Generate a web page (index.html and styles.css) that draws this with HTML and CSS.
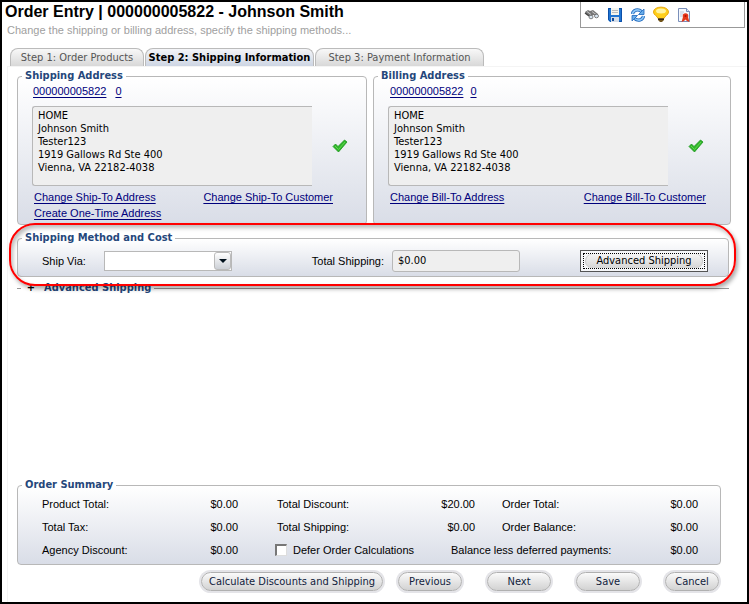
FILE: index.html
```html
<!DOCTYPE html>
<html lang="en">
<head>
<meta charset="utf-8">
<title>Order Entry</title>
<link rel="stylesheet" href="styles.css">
</head>
<body>
<div class="window">
  <header class="header">
    <div class="heading">
      <h1>Order Entry | 000000005822 - Johnson Smith</h1>
      <p>Change the shipping or billing address, specify the shipping methods...</p>
    </div>
    <div class="toolbar">
      <button type="button" aria-label="Find">
        <svg width="16" height="16" viewBox="0 0 16 16"><path d="M1 5l3-2 2 1 3-1 5 4-1 2-4-1-2 2-5-3z" fill="#777"/><path d="M3 4.500l4 3M8 4.500l4 3" stroke="#c8c8c8"/><path d="M1 6l4 3" stroke="#444" stroke-width="1.400"/><ellipse cx="7" cy="10" rx="2" ry="1.800" fill="#d8e6f2" stroke="#666" stroke-width=".8"/><ellipse cx="12.500" cy="9" rx="2" ry="1.800" fill="#d8e6f2" stroke="#666" stroke-width=".8"/></svg>
      </button>
      <button type="button" aria-label="Save order">
        <svg width="16" height="16" viewBox="0 0 16 16"><path d="M1 1h14v14H3l-2-2z" fill="#1f74d2"/><path d="M1.500 1.500h13v13H3.500l-2-2z" fill="none" stroke="#0c4fa8"/><path d="M4 1h8v7H4z" fill="#f4f4ee"/><path d="M5 3.500h6M5 5.500h6" stroke="#bbb"/><path d="M4 10h8v5H4z" fill="#d5dde8"/><path d="M5 11h2v3H5z" fill="#134a96"/></svg>
      </button>
      <button type="button" aria-label="Refresh">
        <svg width="16" height="16" viewBox="0 0 16 16"><path d="M2.500 7C3 3 8 1.500 11.500 4.500M13.500 9C13 13 8 14.500 4.500 11.500" fill="none" stroke="#1c66bd" stroke-width="3.200"/><path d="M2.500 7C3 3 8 1.500 11.500 4.500M13.500 9C13 13 8 14.500 4.500 11.500" fill="none" stroke="#8cc6f6" stroke-width="1.600"/><path d="M14 2v5.500H8.500zM2 14V8.500h5.500z" fill="#6aaeea" stroke="#1c66bd" stroke-width=".8"/></svg>
      </button>
      <button type="button" aria-label="Tips">
        <svg width="18" height="17" viewBox="0 0 18 17"><path d="M1.500 6c0-6.500 15-6.500 15 0 0 3-4 4-4.500 6.500H6C5.500 10 1.500 9 1.500 6z" fill="#ffcf1b" stroke="#e9a80c"/><ellipse cx="9" cy="5" rx="5" ry="2.500" fill="#fff3a0"/><path d="M6 12h6v2l-2 2H8l-2-2z" fill="#72551c"/><path d="M6 13.500h6" stroke="#332817"/></svg>
      </button>
      <button type="button" aria-label="Certificate">
        <svg width="16" height="16" viewBox="0 0 16 16"><path d="M2.500 1.500h8l3 3v10h-11z" fill="#f5f8fd" stroke="#7a8fba"/><path d="M10.500 1.500v3h3" fill="#dce6f5" stroke="#7a8fba"/><path d="M4 5h4M4 7h3M4 9h2" stroke="#bcc8dc"/><path d="M7 10l-1.500 5 2.500-1 1.500-1.500L11 14l2.500 1L12 10z" fill="#e33a1c"/><circle cx="9.500" cy="9" r="2.800" fill="#e8351a"/><circle cx="9.500" cy="9" r="1" fill="#a81508"/></svg>
      </button>
    </div>
  </header>

  <nav class="tabs">
    <button type="button" class="tab">Step 1: Order Products</button>
    <button type="button" class="tab tab-active">Step 2: Shipping Information</button>
    <button type="button" class="tab">Step 3: Payment Information</button>
  </nav>

  <main class="content">
    <div class="addresses">
      <fieldset class="panel">
        <legend>Shipping Address</legend>
        <div class="ids"><a href="#">000000005822</a><a href="#">0</a></div>
        <div class="address-row">
          <address>HOME<br>Johnson Smith<br>Tester123<br>1919 Gallows Rd Ste 400<br>Vienna, VA 22182-4038</address>
          <svg class="check" width="16" height="14" viewBox="0 0 16 14"><path d="M1 7.500L3.500 5 6 7.500 12.500 1 15 3 6.500 13z" fill="#2fb62a" stroke="#1b941c" stroke-width=".8"/><path d="M3 7l3.500 3.500L13 3" fill="none" stroke="#62d650"/></svg>
        </div>
        <div class="links"><a href="#">Change Ship-To Address</a><a href="#">Change Ship-To Customer</a></div>
        <div class="links"><a href="#">Create One-Time Address</a></div>
      </fieldset>
      <fieldset class="panel">
        <legend>Billing Address</legend>
        <div class="ids ids-billing"><a href="#">000000005822</a><a href="#">0</a></div>
        <div class="address-row">
          <address>HOME<br>Johnson Smith<br>Tester123<br>1919 Gallows Rd Ste 400<br>Vienna, VA 22182-4038</address>
          <svg class="check" width="16" height="14" viewBox="0 0 16 14"><path d="M1 7.500L3.500 5 6 7.500 12.500 1 15 3 6.500 13z" fill="#2fb62a" stroke="#1b941c" stroke-width=".8"/><path d="M3 7l3.500 3.500L13 3" fill="none" stroke="#62d650"/></svg>
        </div>
        <div class="links links-billing"><a href="#">Change Bill-To Address</a><a href="#">Change Bill-To Customer</a></div>
      </fieldset>
    </div>

    <div class="highlighted">
      <fieldset class="panel method">
        <legend>Shipping Method and Cost</legend>
        <div class="method-row">
          <div class="field field-via">
            <label for="via">Ship Via:</label>
            <span class="combo"><select id="via"><option></option></select><span class="arrow"></span></span>
          </div>
          <div class="field field-total">
            <label for="total">Total Shipping:</label>
            <input id="total" class="readonly" value="$0.00" readonly>
          </div>
          <button type="button" class="advanced-button"><span class="focus-ring"><span class="face">Advanced Shipping</span></span></button>
        </div>
      </fieldset>
      <fieldset class="advanced">
        <legend><button type="button" aria-label="Expand">+</button>Advanced Shipping</legend>
      </fieldset>
      <div class="callout"></div>
    </div>

    <fieldset class="panel summary">
      <legend>Order Summary</legend>
      <div class="summary-row">
        <div class="pair"><span>Product Total:</span><output>$0.00</output></div>
        <div class="pair"><span>Total Discount:</span><output>$20.00</output></div>
        <div class="pair"><span>Order Total:</span><output>$0.00</output></div>
      </div>
      <div class="summary-row">
        <div class="pair"><span>Total Tax:</span><output>$0.00</output></div>
        <div class="pair"><span>Total Shipping:</span><output>$0.00</output></div>
        <div class="pair"><span>Order Balance:</span><output>$0.00</output></div>
      </div>
      <div class="summary-row summary-last">
        <div class="pair"><span>Agency Discount:</span><output>$0.00</output></div>
        <label class="defer"><input type="checkbox">Defer Order Calculations</label>
        <div class="pair"><span>Balance less deferred payments:</span><output>$0.00</output></div>
      </div>
    </fieldset>

    <div class="actions">
      <button type="button" class="pill pill-wide">Calculate Discounts and Shipping</button>
      <button type="button" class="pill">Previous</button>
      <button type="button" class="pill">Next</button>
      <button type="button" class="pill">Save</button>
      <button type="button" class="pill pill-small">Cancel</button>
    </div>
  </main>
</div>
</body>
</html>
```
FILE: styles.css
```css
* { box-sizing: border-box; }

body {
  margin: 0;
  background: #fff;
  color: #000;
  font: 11px/16px "DejaVu Sans Condensed", "DejaVu Sans", Tahoma, sans-serif;
}

button, input, select { font: inherit; color: inherit; }
a { color: #00007c; text-underline-offset: 2px; text-decoration-skip-ink: none; }

.window {
  display: flex;
  flex-direction: column;
  min-height: 100vh;
  border: 2px solid #000;
}

/* Header */
.header { display: flex; justify-content: space-between; }
.heading { padding-left: 3px; font-family: "Liberation Sans", Arial, sans-serif; }
h1 { margin: 0; font-size: 16px; line-height: 20px; }
.heading p { margin: 0; padding-left: 2px; color: #a0a0a0; }

.toolbar {
  display: flex;
  align-items: center;
  gap: 5px;
  width: 165px;
  height: 26px;
  margin-right: 2px;
  padding-left: 2px;
  border: 1px solid #999;
  border-top: 0;
}
.toolbar button { display: flex; padding: 0; width: 18px; justify-content: center; border: 0; background: none; }

/* Tabs */
.tabs { display: flex; gap: 1px; margin-top: 10px; padding-left: 8px; }
.tab {
  width: 134px;
  height: 18px;
  padding: 0;
  border: 1px solid #bbb;
  border-bottom: 0;
  border-radius: 8px 8px 0 0;
  background: linear-gradient(#f8f8f8, #d8d8d8);
  color: #555;
  white-space: nowrap;
}
.tab-active {
  width: 169px;
  background: linear-gradient(#f4f5f8, #cdd5e3);
  color: #000;
  font-weight: bold;
}
.tab:last-child { width: 169px; }

.content {
  display: flex;
  flex: 1;
  flex-direction: column;
  margin-left: 5px;
  padding: 2px 16px 11px 9px;
  border-top: 1px solid #f4f4f4;
  border-left: 1px solid #f4f4f4;
}

/* Group boxes */
fieldset { min-width: 0; margin: 0; padding: 0; border: 1px solid #b8b8b8; }
legend {
  height: 14px;
  margin-left: 4px;
  padding: 0 3px;
  color: #25477b;
  font-weight: bold;
  line-height: 14px;
}
.panel { border-radius: 4px; background: linear-gradient(#fff, #d9dde7); }

.addresses { display: grid; grid-template-columns: 350fr 358fr; gap: 6px; }
.addresses .panel { padding: 0 15px 3px 14px; }
.addresses legend { margin-left: -10px; }
.ids, .links { font-family: "Liberation Sans", Arial, sans-serif; }
.ids { display: flex; gap: 9px; padding-left: 1px; }
.ids-billing { gap: 7px; padding-left: 2px; }
.address-row { display: flex; align-items: center; margin: 7px 0 3px; }
address {
  width: 280px;
  height: 80px;
  padding: 2px 5px;
  border: 1px solid #b8b8b8;
  border-right: 0;
  border-radius: 3px 0 0 3px;
  background: #efefef;
  font-style: normal;
  line-height: 13px;
}
.check { margin-left: 20px; }
.links { display: flex; justify-content: space-between; padding: 0 18px 0 2px; }
.links-billing { padding-right: 9px; }

/* Shipping method */
.highlighted { position: relative; margin-top: 6px; }
.method { margin-right: 2px; }
.method-row {
  display: flex;
  align-items: center;
  height: 31px;
  padding: 0 20px 0 24px;
}
.field { display: flex; align-items: center; }
label, .summary { font-family: "Liberation Sans", Arial, sans-serif; }
.field-via { gap: 18px; }
.field-total { gap: 8px; margin: 0 60px 0 auto; }
.combo { position: relative; width: 128px; height: 20px; }
.combo select {
  display: block;
  appearance: none;
  width: 100%;
  height: 100%;
  border: 1px solid #b8b8b8;
  border-radius: 0;
  background: #fff;
}
.arrow {
  position: absolute;
  top: 1px;
  right: 1px;
  width: 17px;
  height: 18px;
  border: 1px solid #bbb;
  border-radius: 3px;
  background: linear-gradient(#fff, #ccd0d6);
  pointer-events: none;
}
.arrow::after {
  content: "";
  position: absolute;
  top: 6px;
  left: 4px;
  border: 4px solid transparent;
  border-top-color: #00101c;
  border-bottom: 0;
}
.readonly {
  width: 128px;
  height: 22px;
  padding: 0 5px;
  border: 1px solid #b8b8b8;
  border-radius: 3px;
  background: #efefef;
}
.advanced-button {
  width: 128px;
  height: 22px;
  padding: 2px;
  border: 1px solid #555;
  background: #f6f7f9;
}
.focus-ring { display: block; border: 1px dotted #000; }
.face {
  display: block;
  margin: 0 1px;
  border-radius: 8px;
  background: linear-gradient(#f4f4f4, #d6d6d6);
  box-shadow: inset 1px 0 #ccc, inset -1px 0 #ccc;
  line-height: 14px;
}
.advanced { margin: 4px 2px 0 0; border-width: 1px 0 0; border-color: #999; }
.advanced legend { display: flex; gap: 7px; padding-left: 4px; }
.advanced legend button { width: 12px; padding: 0; border: 0; background: none; color: #000; line-height: 12px; }
.callout {
  position: absolute;
  inset: -8px -5px 9px -8px;
  border: 2px solid #f00;
  border-radius: 26px;
  box-shadow: 2px 3px 4px #0005, inset 2px 3px 4px #0004;
  pointer-events: none;
}

/* Order summary */
.summary { margin: auto 10px 0 0; padding: 0 22px 3px 24px; }
.summary legend { margin-left: -20px; font-family: "DejaVu Sans Condensed", "DejaVu Sans", Tahoma, sans-serif; }
.summary-row {
  display: grid;
  grid-template-columns: 235fr 225fr 196fr;
  height: 23px;
  align-items: center;
}
.summary-last { grid-template-columns: 235fr 174fr 247fr; }
.pair { display: flex; justify-content: space-between; }
.pair:first-child { padding-right: 39px; }
.pair:nth-child(2) { padding-right: 27px; }
.defer { display: flex; align-items: center; gap: 6px; margin-left: -2px; white-space: nowrap; }
.defer input {
  appearance: none;
  width: 12px;
  height: 12px;
  margin: 0;
  border: 1px solid #ddd;
  border-top: 2px solid #777;
  border-left: 2px solid #777;
  background: #fff;
}
.defer input:checked { background: #25477b; }

/* Actions */
.actions { display: flex; justify-content: flex-end; gap: 25px; margin-top: 7px; padding-right: 12px; }
.pill {
  width: 64px;
  height: 19px;
  padding: 0;
  border: 1px solid #b0b0b0;
  border-radius: 10px;
  background: linear-gradient(#fafafa, #d2d2d2);
  box-shadow: 0 0 0 2px #e4e4e8;
  color: #111c3c;
  line-height: 16px;
  white-space: nowrap;
}
.pill-wide { width: 182px; margin-right: -10px; }
.pill-small { width: 54px; }
```
